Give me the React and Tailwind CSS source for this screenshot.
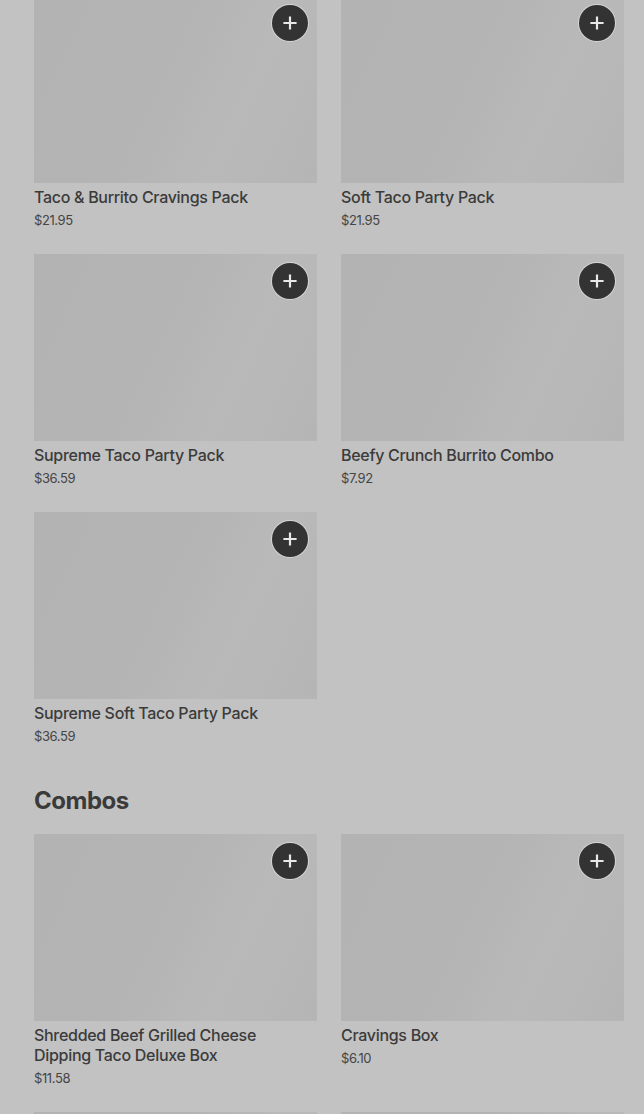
import React from "react";

const packs = [
  { name: "Taco & Burrito Cravings Pack", price: "$21.95" },
  { name: "Soft Taco Party Pack", price: "$21.95" },
  { name: "Supreme Taco Party Pack", price: "$36.59" },
  { name: "Beefy Crunch Burrito Combo", price: "$7.92" },
  { name: "Supreme Soft Taco Party Pack", price: "$36.59" },
];

const combos = [
  { name: "Shredded Beef Grilled Cheese Dipping Taco Deluxe Box", price: "$11.58" },
  { name: "Cravings Box", price: "$6.10" },
  { name: "", price: "" },
  { name: "", price: "" },
];

function PlusButton() {
  return (
    <button className="absolute top-[9px] right-[9px] w-9 h-9 rounded-full bg-[#333333] ring-1 ring-white/40 flex items-center justify-center">
      <svg width="14" height="14" viewBox="0 0 14 14" fill="none">
        <path d="M7 1.5v11M1.5 7h11" stroke="#e8e8e8" strokeWidth="2.2" strokeLinecap="square" />
      </svg>
    </button>
  );
}

function Card({ item }) {
  return (
    <div className="flex flex-col">
      <div className="relative h-[187px] w-full bg-[linear-gradient(115deg,#b3b3b3_0%,#b4b4b4_45%,#b9b9b9_70%,#b5b5b5_100%)]">
        <PlusButton />
      </div>
      <div className="mt-1 text-[16px] leading-5 text-[#3b3b3b] font-medium tracking-[-0.3px] font-['Inter',sans-serif] pr-4">
        {item.name}
      </div>
      <div className="mt-[3px] text-[13px] leading-5 text-[#454545] font-['Inter',sans-serif] tracking-[-0.4px]">
        {item.price}
      </div>
    </div>
  );
}

export default function App() {
  return (
    <div className="min-h-[1114px] bg-[#c2c2c2] overflow-hidden">
      <div className="pl-[34px] pr-[20px] -mt-1">
        <div className="grid grid-cols-2 gap-x-6 gap-y-6">
          {packs.map((p, i) => (
            <Card key={i} item={p} />
          ))}
        </div>
        <h2 className="mt-[41px] text-[24px] leading-7 font-bold text-[#3a3a3a] tracking-[-0.5px] font-['Inter',sans-serif]">
          Combos
        </h2>
        <div className="mt-[19px] grid grid-cols-2 gap-x-6 gap-y-6">
          {combos.map((p, i) => (
            <Card key={i} item={p} />
          ))}
        </div>
      </div>
    </div>
  );
}
